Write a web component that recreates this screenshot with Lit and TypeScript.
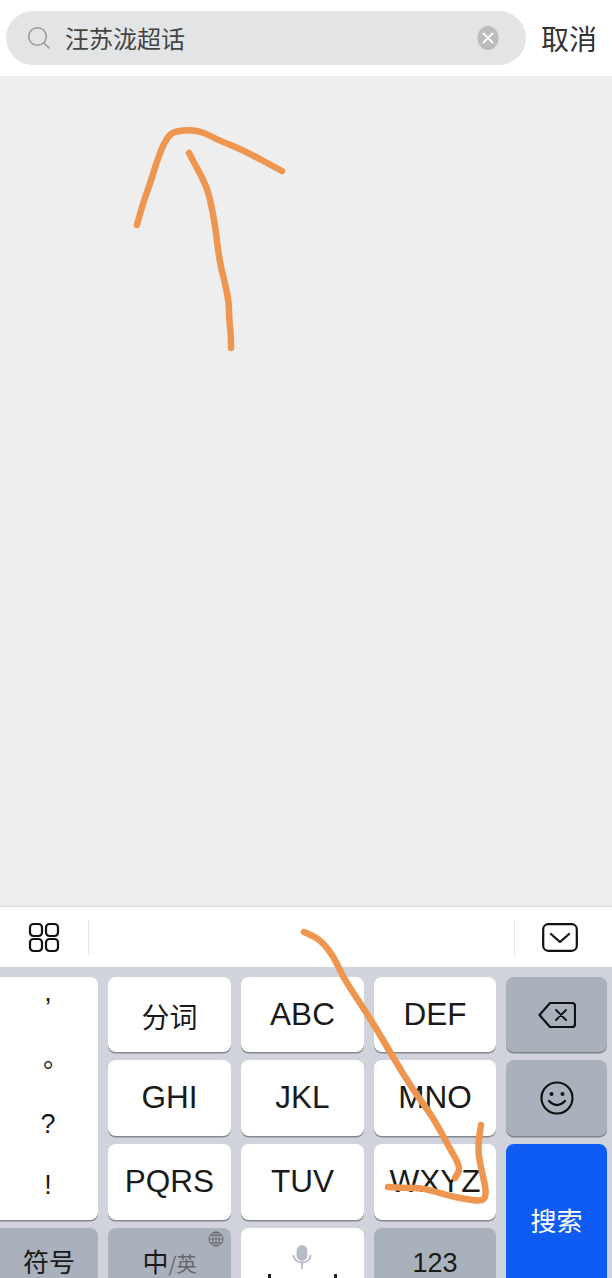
import { LitElement, html, css, svg } from "lit";
import { customElement } from "lit/decorators.js";

type P = [number, number];

const STROKES: P[][] = [
  [[137, 225], [143, 203], [150, 184], [156, 164], [163, 145], [170, 134], [177, 131], [190, 130], [203, 132], [218, 140], [243, 150], [282, 171]],
  [[189, 153], [197, 168], [207, 187], [212, 208], [216, 232], [218, 250], [221, 268], [225, 283], [229, 303], [229, 318], [231, 335], [231, 348]],
  [[304, 932], [314, 936], [323, 943], [334, 957], [343, 977], [356, 997], [373, 1023], [393, 1057], [413, 1090], [433, 1117], [449, 1147], [461, 1168], [455, 1178]],
  [[388, 1187], [405, 1188], [423, 1188], [446, 1195], [465, 1199], [479, 1201], [485, 1199], [486, 1190], [482, 1172], [478, 1153], [479, 1138], [481, 1125]],
];

/** Smooth hand-drawn line: quadratic curves through the midpoints of the samples. */
const smooth = (pts: P[]) => {
  let d = `M${pts[0][0]} ${pts[0][1]}`;
  for (let i = 1; i < pts.length - 1; i++) {
    const mx = (pts[i][0] + pts[i + 1][0]) / 2;
    const my = (pts[i][1] + pts[i + 1][1]) / 2;
    d += ` Q${pts[i][0]} ${pts[i][1]} ${mx} ${my}`;
  }
  const last = pts[pts.length - 1];
  return `${d} L${last[0]} ${last[1]}`;
};

@customElement("app-root")
export class AppRoot extends LitElement {
  static styles = css`
    :host { display: block; position: relative; width: 612px; height: 1278px; overflow: hidden; background: #eeeeee;
      font-family: "Liberation Sans", "Noto Sans CJK SC", sans-serif; color: #111; }
    .page { display: flex; flex-direction: column; height: 1278px; }
    .top { height: 76px; flex: none; background: #fff; display: flex; align-items: center; padding: 0 0 0 6px; box-sizing: border-box; }
    .pill { width: 520px; height: 54px; flex: none; border-radius: 27px; background: #e3e4e6; display: flex; align-items: center; padding: 0 27px 0 21px; box-sizing: border-box; }
    .query { flex: 1; margin-left: 14px; font: 24px "Noto Sans CJK SC", sans-serif; color: #444; line-height: 54px; }
    .cancel { margin-left: 15px; font: 28px "Noto Sans CJK SC", sans-serif; color: #333; line-height: 54px; }
    .body { flex: 1; }
    .bar { height: 61px; flex: none; background: #fff; border-top: 1px solid #d8d8d8; box-sizing: border-box; display: flex; align-items: center; padding: 0 34px 0 28px; }
    .divider { width: 1px; height: 35px; background: #e4e4e4; margin-left: 28px; }
    .spacer { flex: 1; }
    .divider.r { margin: 0 27px 0 0; }
    .kb { flex: none; height: 311px; background: #d0d3dc; padding-top: 10px; box-sizing: border-box; display: grid;
      grid-template-columns: 98px 123px 123px 122px 101px; column-gap: 10px; grid-template-rows: 75px 76px 76px 75px; row-gap: 8px; }
    .key { background: #fff; border-radius: 8px; box-shadow: 0 1.5px 0 #85878c; display: flex; align-items: center; justify-content: center;
      font-size: 31.5px; line-height: 1; color: #1a1a1a; position: relative; }
    .gray { background: #a9b1bd; box-shadow: 0 1.5px 0 #7f838a; }
    .cjk { font: 28px "Noto Sans CJK SC", sans-serif; padding-top: 2px; box-sizing: border-box; }
    .punct { grid-column: 1; grid-row: 1 / span 3; border-radius: 0 8px 8px 0; flex-direction: column; justify-content: flex-start; font-size: 27px; }
    .punct span { height: 61px; display: flex; align-items: center; justify-content: center; }
    .punct .comma { height: 56px; align-items: flex-start; padding-top: 2px; box-sizing: border-box; margin-left: -2px; }
    .punct .stop { font-family: "Noto Sans CJK TC", sans-serif; font-size: 26px; margin-left: -2px; }
    .punct .mark { margin-left: -2px; }
    .first { border-radius: 0 8px 8px 0; }
    .search { grid-column: 5; grid-row: 3 / span 2; background: #0f5cf5; color: #fff; font: 26px "Noto Sans CJK SC", sans-serif; box-shadow: none; padding-bottom: 8px; }
    .low { align-items: flex-start; padding-top: 18px; box-sizing: border-box; }
    .low.cjk { font-size: 26px; padding-top: 14px; }
    .num { font-size: 27px; padding-top: 22px; }
    .en { font: 20px "Noto Sans CJK SC", sans-serif; color: #666; margin-top: 7px; }
    .globe { position: absolute; top: 3px; right: 7px; }
    .space { padding: 0; }
    .mic { position: absolute; top: 17px; left: 51px; }
    .tick { position: absolute; background: #222; width: 3px; height: 6px; top: 46px; }
    .t1 { left: 27px; }
    .t3 { left: 93px; }
    .ink { position: absolute; inset: 0; pointer-events: none; }
  `;

  render() {
    return html`
      <div class="page">
        <div class="top">
          <div class="pill">
            <svg width="24" height="24" viewBox="0 0 24 24" fill="none" stroke="#9a9a9a" stroke-width="1.6" stroke-linecap="round">
              <circle cx="10.5" cy="10.5" r="8.8"/><path d="M17 17l5 5"/>
            </svg>
            <span class="query">汪苏泷超话</span>
            <svg width="22" height="24" viewBox="0 0 22 24">
              <ellipse cx="11" cy="12" rx="10.5" ry="12" fill="#bcbcbe"/>
              <path d="M6.5 7.5l9 9M15.5 7.5l-9 9" stroke="#fff" stroke-width="1.8" stroke-linecap="round"/>
            </svg>
          </div>
          <span class="cancel">取消</span>
        </div>
        <div class="body"></div>
        <div class="bar">
          <svg width="32" height="31" viewBox="0 0 32 31" fill="none" stroke="#111" stroke-width="2.2">
            <rect x="2" y="2" width="12" height="12" rx="3.5"/><rect x="18" y="2" width="12" height="12" rx="3.5"/>
            <rect x="2" y="17" width="12" height="12" rx="3.5"/><rect x="18" y="17" width="12" height="12" rx="3.5"/>
          </svg>
          <div class="divider"></div>
          <div class="spacer"></div>
          <div class="divider r"></div>
          <svg width="36" height="29" viewBox="0 0 36 29" fill="none" stroke="#111" stroke-width="2.2">
            <rect x="1.2" y="1.2" width="33.6" height="26.6" rx="5"/>
            <path d="M9 11l9 8 9-8" stroke-linecap="round" stroke-linejoin="round"/>
          </svg>
        </div>
        <div class="kb">
          <div class="key punct"><span class="comma">,</span><span class="stop">。</span><span class="mark">?</span><span class="mark">!</span></div>
          <div class="key cjk">分词</div>
          <div class="key">ABC</div>
          <div class="key">DEF</div>
          <div class="key gray">
            <svg width="38" height="28" viewBox="0 0 38 28" fill="none" stroke="#111" stroke-width="2.2" stroke-linejoin="round">
              <path d="M12 2h22a3 3 0 0 1 3 3v18a3 3 0 0 1-3 3H12L1.5 14z"/>
              <path d="M18 9l10 10M28 9L18 19" stroke-width="1.8" stroke-linecap="round"/>
            </svg>
          </div>
          <div class="key">GHI</div>
          <div class="key">JKL</div>
          <div class="key">MNO</div>
          <div class="key gray">
            <svg width="34" height="34" viewBox="0 0 34 34" fill="none" stroke="#111" stroke-width="2.2">
              <circle cx="17" cy="17" r="15.5"/>
              <circle cx="11.5" cy="13" r="2" fill="#111" stroke="none"/><circle cx="22.5" cy="13" r="2" fill="#111" stroke="none"/>
              <path d="M9 20q8 8 16 0" stroke-linecap="round"/>
            </svg>
          </div>
          <div class="key">PQRS</div>
          <div class="key">TUV</div>
          <div class="key">WXYZ</div>
          <div class="key search">搜索</div>
          <div class="key gray low cjk first">符号</div>
          <div class="key gray low cjk">中<span class="en">/英</span>
            <svg class="globe" width="16" height="16" viewBox="0 0 17 17" fill="none" stroke="#666" stroke-width="1">
              <circle cx="8.5" cy="8.5" r="7.5"/><ellipse cx="8.5" cy="8.5" rx="3.5" ry="7.5"/><path d="M1 8.5h15M2 4.5h13M2 12.5h13M8.5 1v15"/>
            </svg>
          </div>
          <div class="key space">
            <svg class="mic" width="20" height="24" viewBox="0 0 20 24" fill="none" stroke="#b8bcc6" stroke-width="1.8">
              <rect x="5.5" y="1" width="9" height="14" rx="4.5" fill="#b8bcc6"/><path d="M1.5 10c0 10 17 10 17 0M10 18v6"/>
            </svg>
            <i class="tick t1"></i><i class="tick t3"></i>
          </div>
          <div class="key gray low num">123</div>
        </div>
      </div>
      <svg class="ink" width="612" height="1278" viewBox="0 0 612 1278" fill="none" stroke="#ee9550" stroke-width="6.5" stroke-linecap="round" stroke-linejoin="round">
        ${STROKES.map((pts) => svg`<path d=${smooth(pts)}/>`)}
      </svg>
    `;
  }
}
